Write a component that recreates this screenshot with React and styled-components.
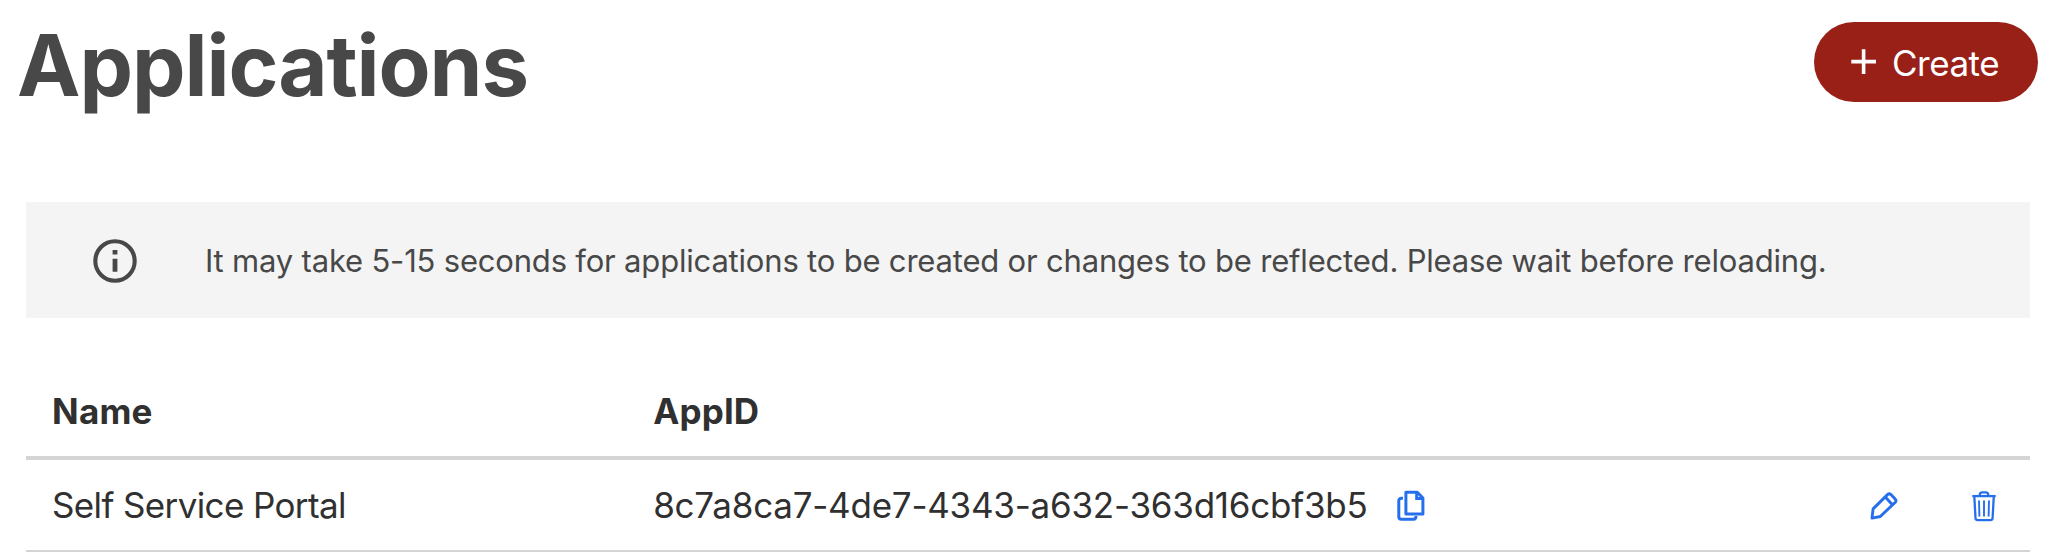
import React from "react";
import styled, { createGlobalStyle } from "styled-components";

const GlobalStyle = createGlobalStyle`
  *, *::before, *::after { box-sizing: border-box; }
  body {
    margin: 0;
    background: #ffffff;
    font-family: Inter, "Liberation Sans", sans-serif;
    color: #303030;
  }
`;

const Page = styled.main`
  display: flex;
  flex-direction: column;
  min-height: 560px;
  padding: 15px 32px 0 17px;
`;

const Header = styled.header`
  display: flex;
  justify-content: space-between;
  align-items: flex-start;
  height: 187px;
`;

const Title = styled.h1`
  margin: 0;
  font-size: 85px;
  line-height: 101px;
  font-weight: 700;
  letter-spacing: -1.06px;
  color: #484848;
`;

const CreateButton = styled.button`
  display: flex;
  align-items: center;
  gap: 15px;
  width: 224px;
  height: 80px;
  margin-top: 7px;
  padding: 0 0 0 37px;
  border: 0;
  border-radius: 40px;
  background: #992016;
  color: #ffffff;
  font-family: inherit;
  font-size: 35px;
  letter-spacing: -0.5px;
`;

const ButtonLabel = styled.span`
  line-height: 44px;
  padding-top: 2px;
`;

const Notice = styled.section`
  display: flex;
  align-items: center;
  gap: 66px;
  height: 116px;
  margin: 0 8px 48px 9px;
  padding: 2px 64px 0 67px;
  background: #f4f4f4;
  color: #484848;
`;

const NoticeText = styled.p`
  margin: 0;
  font-size: 31px;
  line-height: 46px;
  letter-spacing: -0.19px;
  white-space: nowrap;
`;

const Table = styled.div`
  margin: 0 8px 0 9px;
`;

const Row = styled.div`
  display: grid;
  grid-template-columns: 30% 1fr auto;
  align-items: center;
  height: ${(p) => (p.$head ? 94 : 92)}px;
  border-bottom: ${(p) => (p.$head ? 4 : 2)}px solid #d4d4d4;
`;

const Cell = styled.div`
  display: flex;
  align-items: center;
  padding: 0 26px;
  font-size: 35px;
  line-height: 46px;
  font-weight: ${(p) => (p.$head ? 700 : 400)};
  letter-spacing: ${(p) => p.$tracking || 0}px;
  white-space: nowrap;
`;

const Actions = styled(Cell)`
  gap: 74px;
  padding: 0 34px;
`;

const IconButton = styled.button`
  display: flex;
  padding: 2px 0 0;
  border: 0;
  margin-left: ${(p) => p.$offset || 0}px;
  background: none;
  color: #266fec;
`;

const Icon = styled.svg`
  display: block;
  flex: none;
  fill: none;
  stroke: currentColor;
`;

const PlusIcon = () => (
  <Icon width="26" height="26" viewBox="0 0 26 26" strokeWidth="3.6">
    <path d="M.3 12.6H25M12.6 .2V25" />
  </Icon>
);

const InfoIcon = () => (
  <Icon width="46" height="46" viewBox="0 0 46 46">
    <circle cx="22" cy="23" r="19.7" strokeWidth="4.1" />
    <path d="M22 12.1V16.4M22 20.8V33.8" strokeWidth="4.8" />
  </Icon>
);

const CopyIcon = () => (
  <Icon width="28" height="32" viewBox="0 0 28 32" strokeWidth="3">
    <path d="M8.9 2.3H20.3L25.9 8V24.1H8.9Z" strokeLinejoin="round" />
    <path d="M19.7 2.5V8.4H26" />
    <path d="M6 8.3H4.4Q1.8 8.3 1.8 10.9V26.8Q1.8 29.3 4.4 29.3H16.6Q19 29.3 19 26" />
  </Icon>
);

const PencilIcon = () => (
  <Icon width="28" height="28" viewBox="0 0 28 28" strokeWidth="2.9" strokeLinejoin="round">
    <path d="M2 26.1L3.1 16.9L17.5 2.6Q19.2 1 20.9 2.6L25.4 7.3Q26.6 8.8 25.3 10.2L10.3 24.5Z" />
    <path d="M15.3 5.1L22.4 12.7" />
  </Icon>
);

const TrashIcon = () => (
  <Icon width="24" height="31" viewBox="0 0 24 31" strokeWidth="2.3">
    <path d="M.3 5.1H23.7" />
    <path d="M7.8 4.6V3.7Q7.8 1.3 10.2 1.3H13.8Q16.2 1.3 16.2 3.7V4.6" />
    <path d="M2.3 5.1L3.5 27Q3.7 29.2 5.6 29.2H18.5Q20.4 29.2 20.6 27L21.8 5.1" />
    <path d="M7 9.4L7.4 25.4M12 9.4V25.4M17 9.4L16.6 25.4" strokeWidth="1.9" />
  </Icon>
);

export default function App() {
  return (
    <>
      <GlobalStyle />
      <Page>
        <Header>
          <Title>Applications</Title>
          <CreateButton>
            <PlusIcon />
            <ButtonLabel>Create</ButtonLabel>
          </CreateButton>
        </Header>
        <Notice>
          <InfoIcon />
          <NoticeText>
            It may take 5-15 seconds for applications to be created or changes to be
            reflected. Please wait before reloading.
          </NoticeText>
        </Notice>
        <Table>
          <Row $head>
            <Cell $head $tracking={0.2}>Name</Cell>
            <Cell $head $tracking={0.15}>AppID</Cell>
          </Row>
          <Row>
            <Cell $tracking={-0.63}>Self Service Portal</Cell>
            <Cell $tracking={-0.24}>
              8c7a8ca7-4de7-4343-a632-363d16cbf3b5
              <IconButton $offset={29} aria-label="Copy">
                <CopyIcon />
              </IconButton>
            </Cell>
            <Actions>
              <IconButton aria-label="Edit">
                <PencilIcon />
              </IconButton>
              <IconButton aria-label="Delete">
                <TrashIcon />
              </IconButton>
            </Actions>
          </Row>
        </Table>
      </Page>
    </>
  );
}
